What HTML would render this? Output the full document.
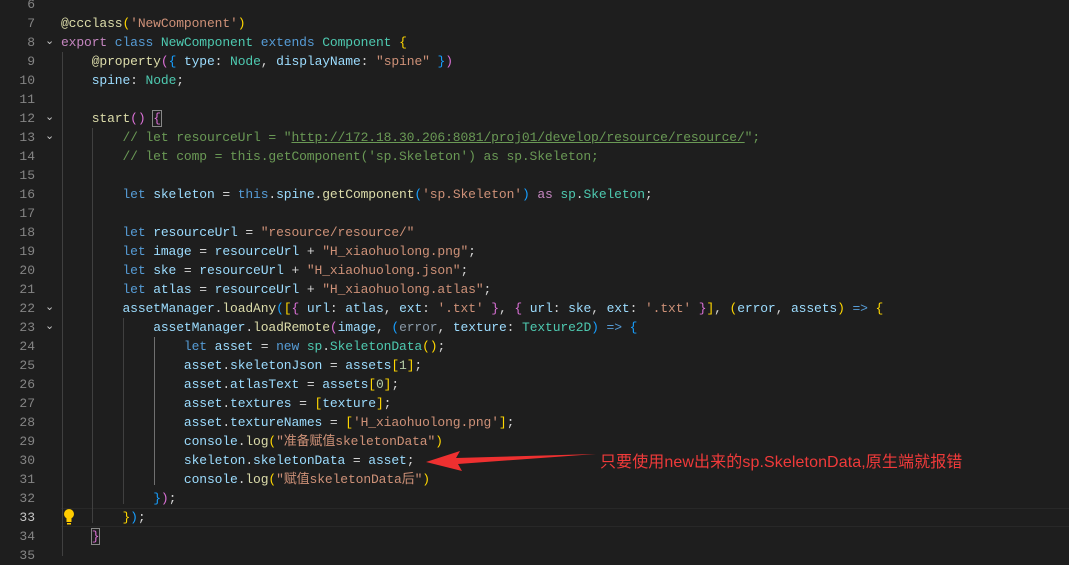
<!DOCTYPE html>
<html><head><meta charset="utf-8"><style>
body{margin:0;background:#1e1e1e;width:1069px;height:556px;overflow:hidden;position:relative;font-family:"Liberation Mono","Noto Sans CJK SC",monospace;font-size:13px;color:#d4d4d4}
.l{position:absolute;left:61px;height:19px;line-height:19px;white-space:pre;letter-spacing:-0.12px}
.n{position:absolute;left:0;width:35px;text-align:right;height:19px;line-height:19px;color:#858585}
.k{color:#569cd6}.p{color:#c586c0}.t{color:#4ec9b0}.v{color:#9cdcfe}.f{color:#dcdcaa}.s{color:#ce9178}.c{color:#6a9955}.nm{color:#b5cea8}
.y{color:#ffd700}.m{color:#da70d6}.b{color:#179fff}
.g{position:absolute;width:1px;background:#404040}
.fold{position:absolute;left:45px;color:#c5c5c5;font-size:11px}
</style></head><body>
<div style="position:absolute;left:61px;top:508px;width:1008px;height:17px;border-top:1px solid #282828;border-bottom:1px solid #282828"></div>
<div class="g" style="left:62px;top:52px;height:504px"></div>
<div class="g" style="left:92px;top:128px;height:395px"></div>
<div class="g" style="left:123px;top:318px;height:186px"></div>
<div class="g" style="left:154px;top:337px;height:148px;background:#707070"></div>

<div class="n" style="top:-5px">6</div>
<div class="n" style="top:14px">7</div>
<div class="n" style="top:33px">8</div>
<div class="n" style="top:52px">9</div>
<div class="n" style="top:71px">10</div>
<div class="n" style="top:90px">11</div>
<div class="n" style="top:109px">12</div>
<div class="n" style="top:128px">13</div>
<div class="n" style="top:147px">14</div>
<div class="n" style="top:166px">15</div>
<div class="n" style="top:185px">16</div>
<div class="n" style="top:204px">17</div>
<div class="n" style="top:223px">18</div>
<div class="n" style="top:242px">19</div>
<div class="n" style="top:261px">20</div>
<div class="n" style="top:280px">21</div>
<div class="n" style="top:299px">22</div>
<div class="n" style="top:318px">23</div>
<div class="n" style="top:337px">24</div>
<div class="n" style="top:356px">25</div>
<div class="n" style="top:375px">26</div>
<div class="n" style="top:394px">27</div>
<div class="n" style="top:413px">28</div>
<div class="n" style="top:432px">29</div>
<div class="n" style="top:451px">30</div>
<div class="n" style="top:470px">31</div>
<div class="n" style="top:489px">32</div>
<div class="n" style="top:508px;color:#c6c6c6">33</div>
<div class="n" style="top:527px">34</div>
<div class="n" style="top:546px">35</div>

<div class="fold" style="top:34px">&#8964;</div>
<div class="fold" style="top:110px">&#8964;</div>
<div class="fold" style="top:129px">&#8964;</div>
<div class="fold" style="top:300px">&#8964;</div>
<div class="fold" style="top:319px">&#8964;</div>

<div class="l" style="top:14px"><span class="f">@ccclass</span><span class="y">(</span><span class="s">'NewComponent'</span><span class="y">)</span></div>
<div class="l" style="top:33px"><span class="p">export</span> <span class="k">class</span> <span class="t">NewComponent</span> <span class="k">extends</span> <span class="t">Component</span> <span class="y">{</span></div>
<div class="l" style="top:52px">    <span class="f">@property</span><span class="m">(</span><span class="b">{</span> <span class="v">type</span>: <span class="t">Node</span>, <span class="v">displayName</span>: <span class="s">"spine"</span> <span class="b">}</span><span class="m">)</span></div>
<div class="l" style="top:71px">    <span class="v">spine</span>: <span class="t">Node</span>;</div>
<div class="l" style="top:109px">    <span class="f">start</span><span class="m">()</span> <span class="m" style="outline:1px solid #888">{</span></div>
<div class="l c" style="top:128px">        // let resourceUrl = "<span style="text-decoration:underline">http://172.18.30.206:8081/proj01/develop/resource/resource/</span>";</div>
<div class="l c" style="top:147px">        // let comp = this.getComponent('sp.Skeleton') as sp.Skeleton;</div>
<div class="l" style="top:185px">        <span class="k">let</span> <span class="v">skeleton</span> = <span class="k">this</span>.<span class="v">spine</span>.<span class="f">getComponent</span><span class="b">(</span><span class="s">'sp.Skeleton'</span><span class="b">)</span> <span class="p">as</span> <span class="t">sp</span>.<span class="t">Skeleton</span>;</div>
<div class="l" style="top:223px">        <span class="k">let</span> <span class="v">resourceUrl</span> = <span class="s">"resource/resource/"</span></div>
<div class="l" style="top:242px">        <span class="k">let</span> <span class="v">image</span> = <span class="v">resourceUrl</span> + <span class="s">"H_xiaohuolong.png"</span>;</div>
<div class="l" style="top:261px">        <span class="k">let</span> <span class="v">ske</span> = <span class="v">resourceUrl</span> + <span class="s">"H_xiaohuolong.json"</span>;</div>
<div class="l" style="top:280px">        <span class="k">let</span> <span class="v">atlas</span> = <span class="v">resourceUrl</span> + <span class="s">"H_xiaohuolong.atlas"</span>;</div>
<div class="l" style="top:299px">        <span class="v">assetManager</span>.<span class="f">loadAny</span><span class="b">(</span><span class="y">[</span><span class="m">{</span> <span class="v">url</span>: <span class="v">atlas</span>, <span class="v">ext</span>: <span class="s">'.txt'</span> <span class="m">}</span>, <span class="m">{</span> <span class="v">url</span>: <span class="v">ske</span>, <span class="v">ext</span>: <span class="s">'.txt'</span> <span class="m">}</span><span class="y">]</span>, <span class="y">(</span><span class="v">error</span>, <span class="v">assets</span><span class="y">)</span> <span class="k">=&gt;</span> <span class="y">{</span></div>
<div class="l" style="top:318px">            <span class="v">assetManager</span>.<span class="f">loadRemote</span><span class="m">(</span><span class="v">image</span>, <span class="b">(</span><span class="v" style="color:#8a9aa8">error</span>, <span class="v">texture</span>: <span class="t">Texture2D</span><span class="b">)</span> <span class="k">=&gt;</span> <span class="b">{</span></div>
<div class="l" style="top:337px">                <span class="k">let</span> <span class="v">asset</span> = <span class="k">new</span> <span class="t">sp</span>.<span class="t">SkeletonData</span><span class="y">()</span>;</div>
<div class="l" style="top:356px">                <span class="v">asset</span>.<span class="v">skeletonJson</span> = <span class="v">assets</span><span class="y">[</span><span class="nm">1</span><span class="y">]</span>;</div>
<div class="l" style="top:375px">                <span class="v">asset</span>.<span class="v">atlasText</span> = <span class="v">assets</span><span class="y">[</span><span class="nm">0</span><span class="y">]</span>;</div>
<div class="l" style="top:394px">                <span class="v">asset</span>.<span class="v">textures</span> = <span class="y">[</span><span class="v">texture</span><span class="y">]</span>;</div>
<div class="l" style="top:413px">                <span class="v">asset</span>.<span class="v">textureNames</span> = <span class="y">[</span><span class="s">'H_xiaohuolong.png'</span><span class="y">]</span>;</div>
<div class="l" style="top:432px">                <span class="v">console</span>.<span class="f">log</span><span class="y">(</span><span class="s">"准备赋值skeletonData"</span><span class="y">)</span></div>
<div class="l" style="top:451px">                <span class="v">skeleton</span>.<span class="v">skeletonData</span> = <span class="v">asset</span>;</div>
<div class="l" style="top:470px">                <span class="v">console</span>.<span class="f">log</span><span class="y">(</span><span class="s">"赋值skeletonData后"</span><span class="y">)</span></div>
<div class="l" style="top:489px">            <span class="b">}</span><span class="m">)</span>;</div>
<div class="l" style="top:508px">        <span class="y">}</span><span class="b">)</span>;</div>
<div class="l" style="top:527px">    <span class="m" style="outline:1px solid #888">}</span></div>

<svg style="position:absolute;left:62px;top:508px" width="14" height="18" viewBox="0 0 14 18"><circle cx="7" cy="6" r="5" fill="#ffcc00"/><rect x="4.5" y="10" width="5" height="4" fill="#ffcc00"/><rect x="5" y="15" width="4" height="1.5" fill="#ffcc00"/></svg>

<svg style="position:absolute;left:0;top:0" width="1069" height="556"><polygon points="426,462 460,451 456,458 596,454 458,464 462,471" fill="#ee3030"/></svg>
<div style="position:absolute;left:600px;top:453px;font-family:'Liberation Sans','Noto Sans CJK SC',sans-serif;font-size:16px;letter-spacing:0.1px;color:#f03a3a;white-space:nowrap;line-height:20px">只要使用new出来的sp.SkeletonData,原生端就报错</div>
</body></html>
